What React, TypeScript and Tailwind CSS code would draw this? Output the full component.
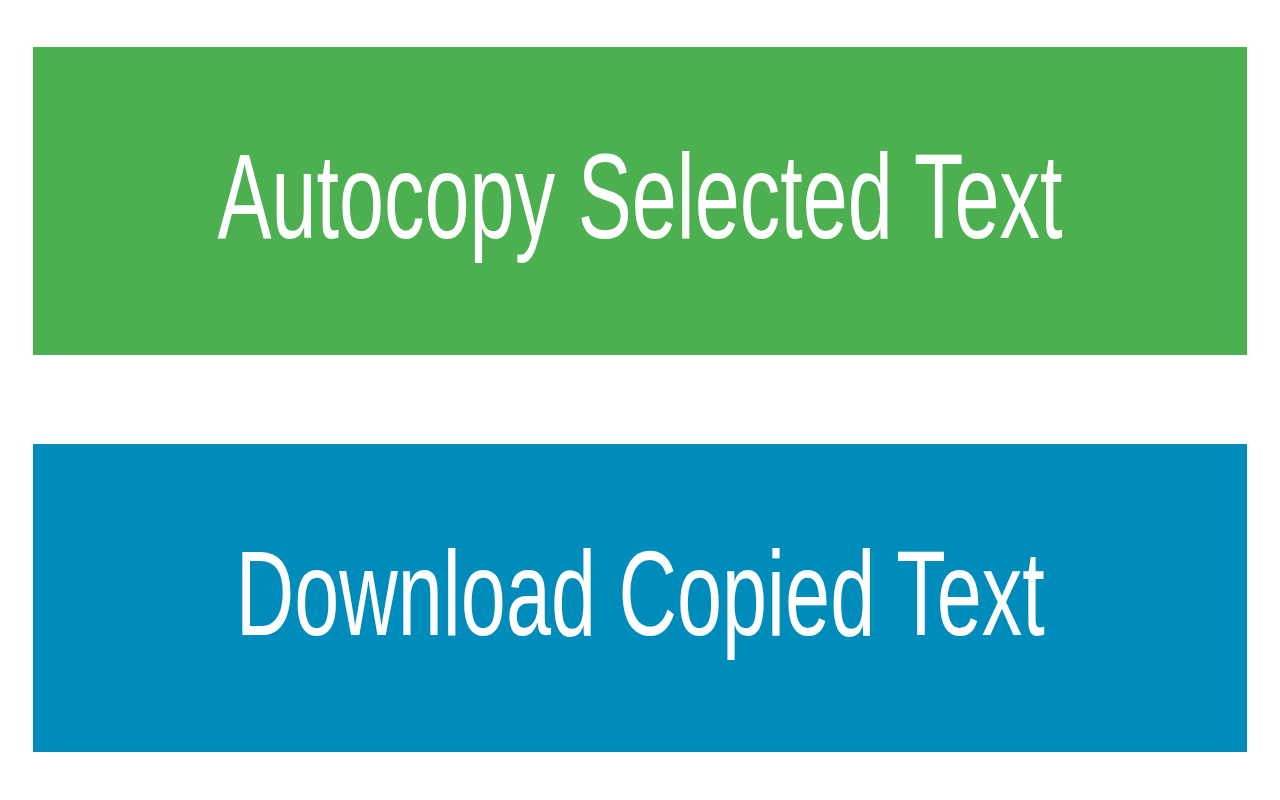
const buttons = [
    { label: 'Autocopy Selected Text', color: 'bg-[#4caf50]' },
    { label: 'Download Copied Text', color: 'bg-[#008cba]' },
];

export default function App() {
    return (
        <div className="w-[1280px] h-[800px] bg-white px-[33px] pt-[47px] flex flex-col gap-[89px]" style={{ fontFamily: '"Liberation Sans", Arial, sans-serif' }}>
            {buttons.map((b) => (
                <button
                    key={b.label}
                    className={`${b.color} w-full h-[308px] flex items-center justify-center text-white`}
                >
                    <span className="text-[120px] leading-none whitespace-nowrap scale-x-[0.675] -translate-y-[5px]">
                        {b.label}
                    </span>
                </button>
            ))}
        </div>
    );
}
